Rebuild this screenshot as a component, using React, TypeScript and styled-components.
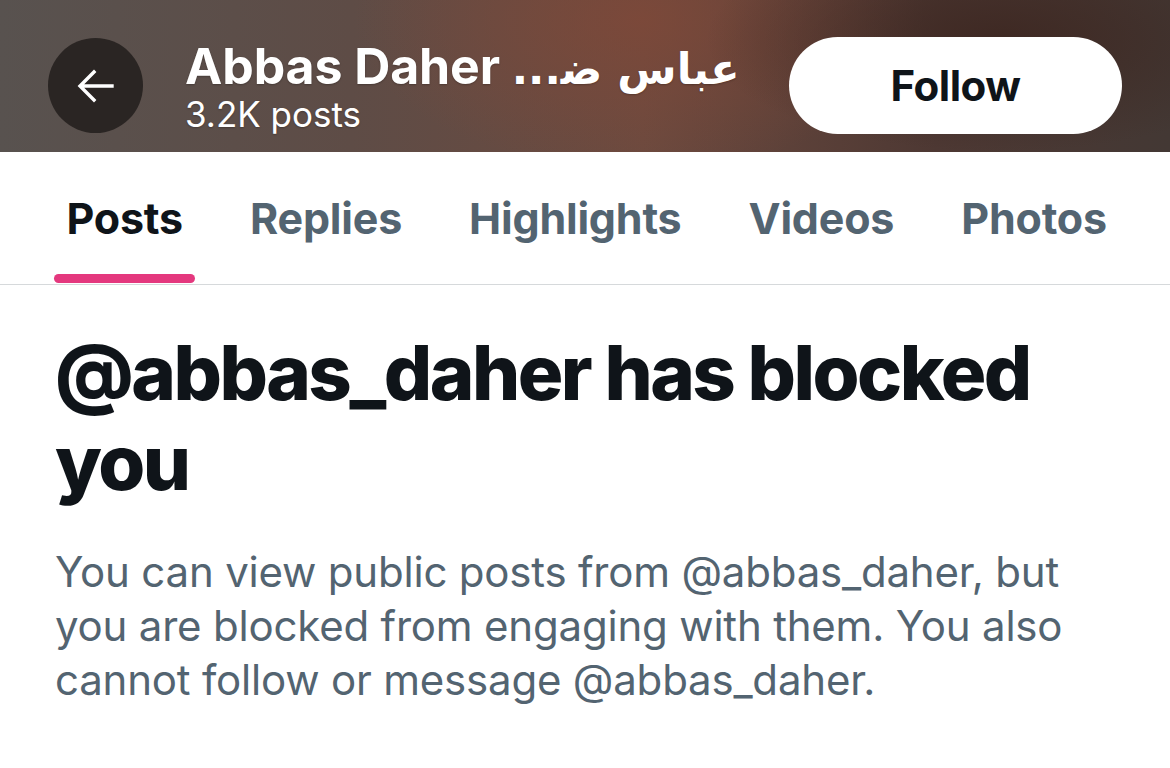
import React from "react";
import styled, { createGlobalStyle } from "styled-components";

const Global = createGlobalStyle`
  html, body { margin: 0; padding: 0; background: #ffffff; }
  body { font-family: Inter, "Noto Sans", "DejaVu Sans", sans-serif; -webkit-font-smoothing: antialiased; }
`;

const Page = styled.div`
  width: 1170px;
  height: 768px;
  overflow: hidden;
  background: #ffffff;
`;

const Header = styled.header`
  height: 152px;
  display: flex;
  align-items: center;
  padding: 19px 48px 0;
  box-sizing: border-box;
  background:
    radial-gradient(ellipse 420px 160px at 1000px 40px, rgba(60, 38, 32, 0.85), rgba(60, 38, 32, 0) 70%),
    radial-gradient(ellipse 380px 200px at 640px 20px, rgba(128, 72, 56, 0.75), rgba(128, 72, 56, 0) 75%),
    linear-gradient(90deg, #58524f 0%, #5e4c46 30%, #6c4a3f 55%, #4d3833 80%, #433834 100%);
`;

const BackButton = styled.button`
  width: 95px;
  height: 95px;
  border-radius: 50%;
  border: none;
  background: #2a2523;
  display: flex;
  align-items: center;
  justify-content: center;
  padding: 0;
  flex: none;
`;

const TitleBlock = styled.div`
  flex: 1;
  display: flex;
  flex-direction: column;
  margin-left: 42px;
  color: #ffffff;
  min-width: 0;
`;

const Name = styled.div`
  font-size: 50px;
  font-weight: 700;
  line-height: 54px;
  letter-spacing: -0.1px;
  white-space: nowrap;
  text-shadow: 0 1px 2px rgba(0, 0, 0, 0.25);
`;

const Arabic = styled.bdi`
  font-family: "DejaVu Sans", sans-serif;
  font-weight: 700;
  font-size: 43px;
  letter-spacing: 0;
`;

const PostCount = styled.div`
  font-size: 35px;
  font-weight: 400;
  line-height: 36px;
  text-shadow: 0 1px 2px rgba(0, 0, 0, 0.25);
`;

const FollowButton = styled.button`
  width: 333px;
  height: 97px;
  border-radius: 49px;
  border: none;
  background: #ffffff;
  color: #0f1419;
  font-family: Inter, "Noto Sans", sans-serif;
  font-size: 42px;
  font-weight: 700;
  letter-spacing: -0.5px;
  flex: none;
`;

const TabBar = styled.nav`
  display: flex;
  height: 133px;
  padding-left: 33px;
  border-bottom: 1.5px solid #d6d9db;
  box-sizing: border-box;
`;

const Tab = styled.div`
  display: flex;
  padding: 0 21px;
`;

const TabInner = styled.div`
  display: flex;
  flex-direction: column;
  padding: 9px 0 0;
`;

const TabLabel = styled.span<{ $active?: boolean }>`
  flex: 1;
  display: flex;
  align-items: center;
  justify-content: center;
  padding: 0 12.5px;
  font-size: 43px;
  font-weight: 700;
  letter-spacing: -0.2px;
  color: ${(p) => (p.$active ? "#0f1419" : "#536471")};
`;

const Indicator = styled.div<{ $active?: boolean }>`
  height: 9px;
  margin-bottom: 1px;
  border-radius: 5px;
  background: ${(p) => (p.$active ? "#e4387e" : "transparent")};
`;

const Content = styled.main`
  padding: 42px 55px 0;
`;

const Heading = styled.h1`
  margin: 0;
  font-size: 76px;
  line-height: 90px;
  font-weight: 800;
  letter-spacing: -2.5px;
  color: #0f1419;
`;

const Body = styled.p`
  margin: 38px 0 0;
  font-size: 42px;
  line-height: 54px;
  font-weight: 400;
  color: #536471;
  letter-spacing: -0.2px;
`;

const tabs = ["Posts", "Replies", "Highlights", "Videos", "Photos"];

export default function App() {
  return (
    <Page>
      <Global />
      <Header>
        <BackButton aria-label="Back">
          <svg width="40" height="40" viewBox="0 0 40 40" fill="none">
            <path d="M36 20H5M18 6L4 20l14 14" stroke="#fff" strokeWidth="3.4" strokeLinecap="square" />
          </svg>
        </BackButton>
        <TitleBlock>
          <Name>
            Abbas Daher <Arabic dir="rtl">{"عباس ض\u200D..."}</Arabic>
          </Name>
          <PostCount>3.2K posts</PostCount>
        </TitleBlock>
        <FollowButton>Follow</FollowButton>
      </Header>
      <TabBar>
        {tabs.map((t, i) => (
          <Tab key={t}>
            <TabInner>
              <TabLabel $active={i === 0}>{t}</TabLabel>
              <Indicator $active={i === 0} />
            </TabInner>
          </Tab>
        ))}
      </TabBar>
      <Content>
        <Heading>@abbas_daher has blocked you</Heading>
        <Body>
          You can view public posts from @abbas_daher, but you are blocked from engaging with them. You also cannot
          follow or message @abbas_daher.
        </Body>
      </Content>
    </Page>
  );
}
